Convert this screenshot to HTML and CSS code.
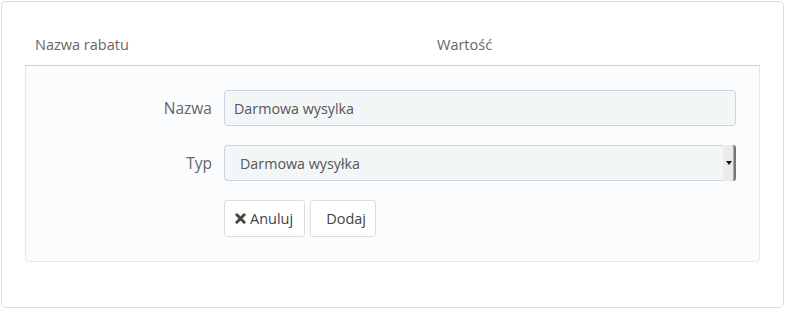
FILE: index.html
```
<!DOCTYPE html>
<html lang="pl">
<head>
  <meta charset="UTF-8" />
  <title>Rabaty</title>
  <link rel="stylesheet" href="styles.css">
</head>
<body>

  <div class="card">
    <!-- Discounts table header -->
    <div class="table-head">
      <div class="th th-name">Nazwa rabatu</div>
      <div class="th">Wartość</div>
    </div>

    <!-- New discount form -->
    <form class="panel">
      <label class="form-label" for="discountName">Nazwa</label>
      <input class="form-control" type="text" id="discountName" value="Darmowa wysylka" />

      <label class="form-label" for="discountType">Typ</label>
      <div class="select-box" id="discountType">
        <span class="select-text">Darmowa wysyłka</span>
        <span class="select-arrow"></span>
      </div>

      <div></div>
      <div class="actions">
        <button type="button" class="btn">
          <svg class="icon" width="11" height="11" viewBox="0 0 12 12"><path d="M2 2 L10 10 M10 2 L2 10" stroke="#444" stroke-width="3.2" stroke-linecap="round" fill="none"/></svg>
          Anuluj
        </button>
        <button type="submit" class="btn btn-add">Dodaj</button>
      </div>
    </form>
  </div>

</body>
</html>
```

FILE: styles.css
```
body {
  margin: 0;
  padding: 1px 1px 0 1px;
  font-family: "Open Sans", Arial, sans-serif;
  background: #fff;
}
.card {
  box-sizing: border-box;
  height: 307px;
  border: 1px solid #ddd;
  border-radius: 5px;
  padding: 23px 23px 0 23px;
}
.table-head {
  display: flex;
  border-bottom: 1px solid #b5d5ea;
}
.th {
  padding: 10px 10px;
  line-height: 20px;
  font-size: 14.5px;
  color: #666;
}
.th-name {
  width: 382px;
}
.panel {
  display: grid;
  grid-template-columns: 186px 1fr;
  column-gap: 12px;
  row-gap: 19px;
  align-items: center;
  padding: 24px 23px 24px 0;
  background: #fafcfe;
  border: 1px solid #e1e9f0;
  border-top: none;
  border-radius: 0 0 4px 4px;
}
.form-label {
  text-align: right;
  font-size: 15.5px;
  color: #666;
}
.form-control,
.select-box {
  box-sizing: border-box;
  height: 36px;
  width: 100%;
  margin: 0;
  background: #f3f6f7;
  border: 1px solid #c9d7dd;
  border-radius: 4px;
  font-family: inherit;
  font-size: 14.3px;
  color: #555;
}
.form-control {
  padding: 0 9px;
}
.select-box {
  display: flex;
  align-items: center;
  justify-content: space-between;
  padding-left: 15px;
  border-right: none;
}
.select-arrow {
  align-self: stretch;
  width: 11px;
  margin: -1px 0;
  background: #ebebeb;
  border-right: 2px solid #777;
  border-radius: 0 3px 3px 0;
  box-shadow: inset -1px 0 #aaa;
  position: relative;
}
.select-arrow::after {
  content: "";
  position: absolute;
  left: 3px;
  top: 16px;
  border-left: 3px solid transparent;
  border-right: 3px solid transparent;
  border-top: 4px solid #111;
}
.actions {
  display: flex;
  gap: 5px;
}
.btn {
  box-sizing: border-box;
  height: 37px;
  margin: 0;
  padding: 0 11px 0 10px;
  background: #fff;
  border: 1px solid #ddd;
  border-radius: 3px;
  font-family: inherit;
  font-size: 14.5px;
  color: #444;
  display: flex;
  align-items: center;
  gap: 4px;
  cursor: pointer;
}
.btn-add {
  padding: 0 9px 0 15px;
}
```
